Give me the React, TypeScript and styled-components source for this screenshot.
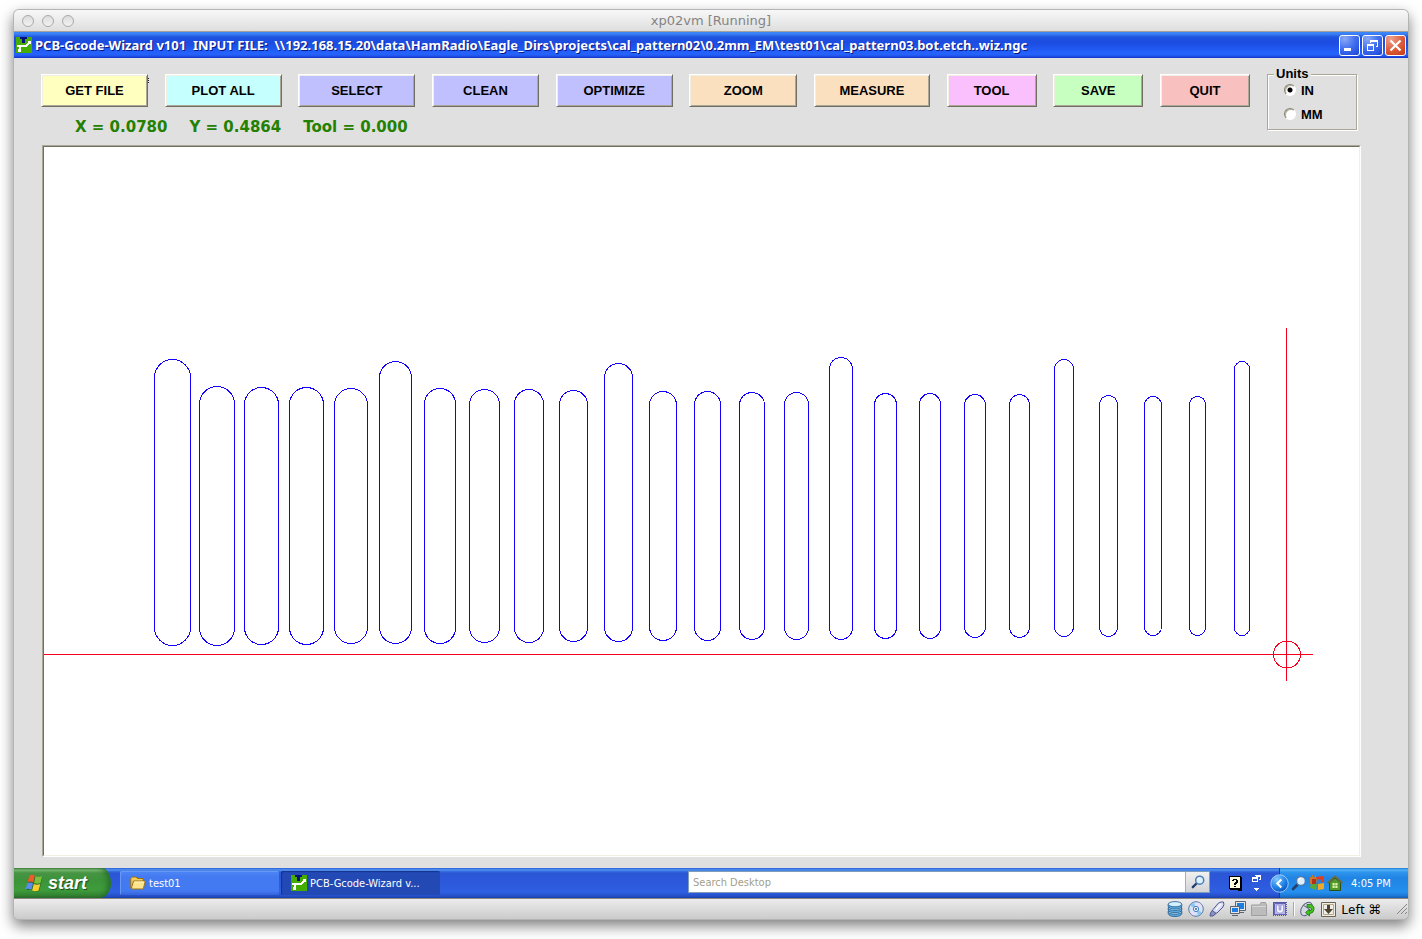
import React, { useState } from 'react';
import styled, { createGlobalStyle, css } from 'styled-components';

const GlobalStyle = createGlobalStyle`
  * { box-sizing: border-box; }
  html, body { margin: 0; padding: 0; background: #fff; }
  button, input { font: inherit; margin: 0; }
  svg { display: block; flex: none; }
`;

const uiBold = css`
  font-family: 'Liberation Sans', Arial, sans-serif;
  font-weight: 700;
  font-size: 13px;
`;
const uiSmall = css`
  font-family: 'DejaVu Sans Condensed', 'DejaVu Sans', sans-serif;
  font-size: 11px;
`;

const Page = styled.div`
  min-height: 100vh;
  padding: 10px 14px 20px;
  display: flex;
  flex-direction: column;
`;

const HostWindow = styled.div`
  flex: 1;
  display: flex;
  flex-direction: column;
  border-radius: 5px;
  background: #e0e0e0;
  box-shadow: 0 0 0 1px #b4b4b4, 0 6px 14px 1px rgba(0, 0, 0, 0.5);
`;

const HostTitle = styled.header`
  height: 22px;
  display: flex;
  align-items: center;
  border-radius: 5px 5px 0 0;
  border-bottom: 1px solid #a5a09a;
  background: linear-gradient(#f8f8f8, #dedede);
  padding: 0 8px;
`;
const HostSide = styled.div`
  width: 80px;
  display: flex;
  gap: 8px;
`;
const HostDot = styled.button`
  width: 12px;
  height: 12px;
  padding: 0;
  border: 1px solid #a9a9a9;
  border-radius: 50%;
  background: linear-gradient(#dcdcdc, #f2f2f2);
`;
const HostName = styled.h1`
  flex: 1;
  margin: 0;
  text-align: center;
  font: 400 13px/22px 'DejaVu Sans', sans-serif;
  color: #848484;
`;

const TitleBar = styled.div`
  height: 26px;
  display: flex;
  align-items: center;
  gap: 3px;
  padding: 0 2px;
  background: linear-gradient(#3a87f8 0, #3a80f4 2px, #1f55e0 5px, #1c4be0 10px, #1f56ee 16px, #2562fd 21px, #2560f8 23px, #1433c8 26px);
`;
const TitleText = styled.div`
  flex: 1;
  min-width: 0;
  font: 700 13px/24px 'Noto Sans', 'Open Sans', sans-serif;
  white-space: pre;
  overflow: hidden;
  color: #fff;
  text-shadow: 1px 1px 0 #0a1883;
`;
const CaptionButtons = styled.div`
  display: flex;
  gap: 2px;
`;
const CaptionButton = styled.button<{ $close?: boolean }>`
  width: 21px;
  height: 21px;
  padding: 0;
  display: grid;
  place-items: center;
  border: 1px solid #fff;
  border-radius: 3px;
  background: ${p =>
    p.$close
      ? 'radial-gradient(circle at 25% 15%, #eda08c, #dc5b3a 55%, #c23a12)'
      : 'radial-gradient(circle at 25% 15%, #8aa9f5, #3f6df0 50%, #1c44d4)'};
`;

const Client = styled.main`
  flex: 1;
  display: flex;
  flex-direction: column;
  padding: 9px 47px 11px 27px;
`;
const TopRow = styled.div`
  display: flex;
  gap: 17px;
  padding-right: 4px;
`;
const Controls = styled.div`
  flex: 1;
  padding-top: 7px;
`;
const Toolbar = styled.div`
  display: flex;
  justify-content: space-between;
`;
const ToolButton = styled.button<{ $tint: string; $width: number; $marked?: boolean }>`
  ${uiBold}
  position: relative;
  width: ${p => p.$width}px;
  height: 33px;
  padding: 0;
  line-height: 28px;
  color: #000;
  background: ${p => p.$tint};
  border: 1px solid;
  border-color: #fff #716f64 #716f64 #fff;
  box-shadow: inset 1px 1px 0 #f1efe2, inset -1px -1px 0 #aca899;
  ${p =>
    p.$marked &&
    css`
      &::after {
        content: '';
        position: absolute;
        left: 106px;
        top: 3px;
        width: 1px;
        height: 6px;
        background: repeating-linear-gradient(#222 0 1px, #eee 1px 2px);
      }
    `}
`;
const Readout = styled.div`
  display: flex;
  gap: 22px;
  padding: 8px 0 0 34px;
  font: 700 15px/24px 'DejaVu Sans', Verdana, sans-serif;
  color: #238000;
  white-space: nowrap;
`;

const Units = styled.fieldset`
  ${uiBold}
  width: 90px;
  height: 63px;
  margin: 0;
  padding: 1px 0 0 16px;
  border: 1px solid #aca899;
  box-shadow: 1px 1px 0 #fff, inset 1px 1px 0 #fff;
  legend {
    margin-left: -10px;
    padding: 0 2px;
    line-height: 14px;
    background: #e0e0e0;
  }
`;
const UnitOption = styled.label`
  display: flex;
  align-items: center;
  gap: 5px;
  height: 16px;
  margin-bottom: 8px;
`;
const Radio = styled.input`
  appearance: none;
  width: 12px;
  height: 12px;
  border: 1px solid;
  border-color: #85826f #fff #fff #85826f;
  border-radius: 50%;
  background: #fff;
  box-shadow: inset 1px 1px 0 #b5b2a4;
  &:checked {
    background: radial-gradient(circle, #000 0 2px, #fff 3px);
  }
`;

const PlotFrame = styled.div`
  flex: 1;
  display: flex;
  margin: 6px 0 0 1px;
  background: #fff;
  border: 1px solid;
  border-color: #aca899 #fff #fff #aca899;
`;
const PlotInner = styled.div`
  flex: 1;
  border: 1px solid;
  border-color: #716f64 #f1efe2 #f1efe2 #716f64;
`;

const Taskbar = styled.nav`
  height: 30px;
  display: flex;
  background: linear-gradient(#2a5cd8 0, #5596ee 2px, #3a74e4 3px, #2b56d4 5px, #2c57da 12px, #2f5fe2 24px, #2450c8 28px, #1b3fa8 30px);
`;
const StartButton = styled.button`
  width: 97px;
  height: 30px;
  padding: 0 0 1px 11px;
  display: flex;
  align-items: center;
  gap: 4px;
  border: 0;
  border-radius: 0 9px 11px 0 / 0 15px 15px 0;
  background: linear-gradient(#3f7f3b 0, #78b872 2px, #479443 5px, #3c933a 12px, #3f9d3c 22px, #348632 27px, #276a27 30px);
  box-shadow: inset -6px 0 6px -3px #256a2b;
  font: italic 700 18px/26px 'Liberation Sans', Arial, sans-serif;
  color: #fff;
  text-shadow: 1px 1px 1px #1b4a1b;
`;
const Tasks = styled.div`
  flex: 1;
  min-width: 0;
  display: flex;
  gap: 2px;
  padding: 3px 0 0 9px;
`;
const TaskButton = styled.button<{ $active?: boolean }>`
  ${uiSmall}
  width: 159px;
  height: 24px;
  padding: 0 10px;
  display: flex;
  align-items: center;
  gap: 3px;
  border: 0;
  border-radius: 2px;
  white-space: nowrap;
  color: #fff;
  background: ${p => (p.$active ? '#2349b5' : 'linear-gradient(#4f86f5, #437af2 6px, #437af2 20px, #3763da)')};
  box-shadow: ${p => (p.$active ? 'inset 1px 1px 1px #16338c' : 'inset 1px 1px 0 #6798f6')};
`;
const Search = styled.form`
  display: flex;
  width: 522px;
  height: 22px;
  margin: 3px 19px 0 0;
  border: 1px solid #7f9db9;
`;
const SearchInput = styled.input`
  ${uiSmall}
  flex: 1;
  min-width: 0;
  border: 0;
  padding: 0 4px;
  background: #fff;
  outline: 0;
  &::placeholder {
    color: #a3a08c;
    opacity: 1;
  }
`;
const SearchGo = styled.button`
  width: 24px;
  padding: 0;
  display: grid;
  place-items: center;
  border: 0;
  border-left: 1px solid #9fb0c4;
  background: linear-gradient(#f0f0f0, #d2d4d8);
`;
const LangBar = styled.div`
  display: flex;
  align-items: center;
  gap: 10px;
  padding-top: 1px;
`;
const Tray = styled.div`
  ${uiSmall}
  width: 129px;
  margin-left: 18px;
  padding-left: 11px;
  display: flex;
  align-items: center;
  gap: 2px;
  position: relative;
  color: #fff;
  border-left: 1px solid #123aa0;
  background: linear-gradient(#1e78d8 0, #52b4f6 2px, #2f96ee 4px, #1f84e4 10px, #2590ee 24px, #1b76d4 28px, #145bb0 30px);
`;
const TrayArrow = styled.button`
  position: absolute;
  left: -10px;
  top: 6px;
  padding: 0;
  border: 0;
  background: none;
`;
const Clock = styled.time`
  margin-left: 6px;
`;

const StatusBar = styled.footer`
  height: 21px;
  display: flex;
  align-items: center;
  justify-content: flex-end;
  gap: 5px;
  border-top: 1px solid #8b8680;
  border-radius: 0 0 5px 5px;
  background: linear-gradient(#ececec, #cbcbcb);
  font: 400 13px/20px 'Noto Sans', 'DejaVu Sans', sans-serif;
  color: #000;
`;
const Separator = styled.span`
  width: 1px;
  height: 14px;
  background: #aaa;
  box-shadow: 1px 0 0 #fafafa;
`;
const HostKey = styled.span`
  white-space: nowrap;
  margin-right: 10px;
`;

type Slot = [x: number, right: number, top: number, bottom: number];
const slots: Slot[] = [
  [154, 190, 359, 645], [199, 234, 386, 645], [244, 278, 387, 644], [289, 323, 387, 644],
  [334, 367, 388, 643], [379, 411, 361, 643], [424, 455, 388, 643], [469, 499, 389, 642],
  [514, 543, 389, 642], [559, 587, 390, 641], [604, 632, 363, 641], [649, 676, 391, 640],
  [694, 720, 391, 640], [739, 764, 392, 639], [784, 808, 392, 639], [829, 852, 357, 639],
  [874, 896, 393, 638], [919, 940, 393, 638], [964, 985, 394, 637], [1009, 1029, 394, 637],
  [1054, 1073, 359, 636], [1099, 1117, 395, 636], [1144, 1161, 396, 635], [1189, 1205, 396, 635],
  [1234, 1249, 361, 635],
];

const Plot = () => (
  <svg width="100%" height="100%" viewBox="44 147 1315 708" fill="none" shapeRendering="crispEdges" role="img" aria-label="Tool paths">
    <g stroke="#1400ff">
      {slots.map(([x, right, top, bottom]) => (
        <rect key={x} x={x + 0.5} y={top + 0.5} width={right - x} height={bottom - top} rx={(right - x) / 2} />
      ))}
    </g>
    <g stroke="#f5001d">
      <path d="M44 654.5H1313M1286.5 328V681" />
      <circle cx="1287" cy="654.5" r="13.5" />
    </g>
  </svg>
);

const AppIcon = () => (
  <svg width="16" height="16" viewBox="0 0 16 16" shapeRendering="crispEdges">
    <path fill="#44ad00" d="M0 0h16v16H0z" />
    <path fill="#00107c" d="M4 0h7v2H9v4H6V2H4z" />
    <path fill="#fff" d="M12 4h3v3h-2v1h-1v1h-1v1H5v3h0v2H2v-3h1v-2H1V8h9V7h1V6h1z" />
  </svg>
);

const WindowsFlag = () => (
  <svg width="19" height="18" viewBox="0 0 19 18">
    <path fill="#173f17" opacity=".5" d="M4 2.500q3-2 6 0 3 1.600 7.500.5l-3 13.500q-3 2-6 .5-3-2-7-.5z" />
    <path fill="#ee5a2a" d="M4.200 2Q7-.3 9.800 1.800L8.200 8.500Q5.500 6.700 2.600 8.200z" />
    <path fill="#7cc03a" d="M10.500 2.300q2.800 1.600 6.700 0l-1.700 6.700q-3.500 1.600-6.500 0z" />
    <path fill="#5a8cf0" d="M2.300 9.200Q5.200 7.500 8 9.400L6.300 15.800Q3.500 13.800.6 15.300z" />
    <path fill="#f8cf2c" d="M8.800 10q3 1.500 6.500 0l-1.700 6.400q-3.300 1.600-6.500 0z" />
  </svg>
);

const FolderIcon = () => (
  <svg width="16" height="14" viewBox="0 0 16 14">
    <path fill="#f3cd58" stroke="#9a7018" d="M.8 12V2.500L2 1h4l1.500 1.500H13V5" />
    <path fill="#fbe48a" stroke="#9a7018" d="M1.200 13 3.500 5H15.300l-2 8z" />
    <path stroke="#fff7c8" d="M4.300 6h9.800" />
  </svg>
);

const Magnifier = ({ size = 14 }: { size?: number }) => (
  <svg width={size} height={size} viewBox="0 0 14 14">
    <path stroke="#23406e" strokeWidth="2.400" strokeLinecap="round" d="M5.500 8.500 1.800 12.200" />
    <circle cx="8.700" cy="5.200" r="4" fill="#dcf0ff" stroke="#4a7cb8" strokeWidth="1.500" />
    <path stroke="#fff" fill="none" d="M6.500 4.800q.5-2 2.500-2" />
  </svg>
);

const HelpIcon = () => (
  <svg width="13" height="15" viewBox="0 0 13 15" shapeRendering="crispEdges">
    <path fill="#000" d="M1 1h12v14H9v-1H1z" />
    <path fill="#ffffd8" d="M0 0h11v12H0z" />
    <path fill="none" stroke="#000" d="M.5.5h11v12H.5z" />
    <path fill="#000" d="M4 3h4v1h1v3H8v1H7v1H5V7h1V6h1V4H5v1H3V4h1zM5 10h2v1H5z" />
  </svg>
);

const RestoreIcons = () => (
  <svg width="9" height="17" viewBox="0 0 9 17" fill="#fff" shapeRendering="crispEdges">
    <path fillRule="evenodd" d="M3 0h6v5H7V4h1V2H4V1H3zM0 2h6v5H0zm1 2v2h4V4z" />
    <path d="M2 13h5v1H6v1H5v1H4v-1H3v-1H2z" />
  </svg>
);

const ArrowCircle = () => (
  <svg width="19" height="19" viewBox="0 0 19 19">
    <defs>
      <radialGradient id="arrowBlue" cx=".35" cy=".25" r=".8">
        <stop offset="0" stopColor="#86c8ff" />
        <stop offset=".6" stopColor="#1f84ea" />
        <stop offset="1" stopColor="#0d4fb8" />
      </radialGradient>
    </defs>
    <circle cx="9.500" cy="9.500" r="8.700" fill="url(#arrowBlue)" stroke="#bfe0fb" strokeWidth=".8" />
    <path fill="none" stroke="#fff" strokeWidth="2" d="M11.300 5.500 7.300 9.500l4 4" />
  </svg>
);

const BlocksIcon = () => (
  <svg width="16" height="16" viewBox="0 0 16 16">
    <path fill="#c87830" d="M1 2h2V0h1v2h2V0h1v2h2v7H1z" />
    <path fill="#dd3e22" d="m7 2 7-1 1 6-6 1z" />
    <path fill="#2f7fd0" d="m8 4 5 1-1 5-5-1z" />
    <path fill="#58a838" d="m2 8 6 1-1 6-6-2z" />
    <path fill="#f0a828" d="m9 9 6-1v6l-6 1z" />
    <path fill="#b23018" d="M3 4h4v5H3z" />
  </svg>
);

const HouseIcon = () => (
  <svg width="16" height="16" viewBox="0 0 16 16">
    <path fill="#4f9a2c" stroke="#2c4f18" d="M2.500 7.500v8h11v-8L8 3z" />
    <path fill="none" stroke="#6b6a3c" strokeWidth="2" strokeLinejoin="round" d="M.8 8 8 1.600 15.200 8" />
    <path fill="#dff0a8" d="M5.500 8h2.200v2.200H5.500zM8.300 8h2.200v2.200H8.300zM5.500 10.800h2.200V13H5.500zM8.300 10.800h2.200V13H8.300z" />
  </svg>
);

const DiskIcon = () => (
  <svg width="16" height="16" viewBox="0 0 16 16" fill="#58aee4" stroke="#1f5688" strokeWidth=".8">
    <path d="M1.200 10.500v2Q2 15.500 8 15.500t6.800-3v-2z" />
    <ellipse cx="8" cy="10.800" rx="6.800" ry="2.400" fill="#c8ecff" />
    <path d="M1.200 7v2Q2 11.700 8 11.700T14.800 9V7z" />
    <ellipse cx="8" cy="7" rx="6.800" ry="2.400" fill="#c8ecff" />
    <path d="M1.200 3.300v2Q2 8 8 8t6.800-2.700v-2z" />
    <ellipse cx="8" cy="3.200" rx="6.800" ry="2.600" fill="#d4f0ff" />
  </svg>
);
const DiscIcon = () => (
  <svg width="16" height="16" viewBox="0 0 16 16">
    <circle cx="8" cy="8" r="7.300" fill="#d6e4f6" stroke="#5878a4" />
    <path fill="#8cc4f4" d="M8 8 2 4.500A7 7 0 0 1 6 1.500zM8 8l6 3.500a7 7 0 0 1-4 3z" />
    <path fill="#e8dcf6" d="m8 8 2-6.500a7 7 0 0 1 4 3zM8 8l-2 6.500a7 7 0 0 1-4-3z" />
    <circle cx="8" cy="8" r="2.600" fill="#fff" stroke="#3c78c0" />
    <circle cx="8" cy="8" r="1" fill="#2458a0" />
  </svg>
);
const UsbIcon = () => (
  <svg width="16" height="16" viewBox="0 0 16 16" strokeLinejoin="round">
    <path fill="#d8dcf4" stroke="#505890" d="M4 8.500 9.500 2Q12 .5 14.500 1q1 2.500-.5 5L8 12q-3 1-4.500-.5t.5-3z" />
    <path fill="#8890c4" stroke="#505890" d="m3.500 9.500 3.500 3-3 2.500L1 15l.5-3z" />
    <path stroke="#fff" strokeWidth="1.500" d="M7 8.500 12 3" />
  </svg>
);
const NetworkIcon = () => (
  <svg width="16" height="16" viewBox="0 0 16 16">
    <path fill="#e4e6ea" stroke="#5c6470" d="M5.500.5h10v9h-10zM9 11.500h5" />
    <path fill="#1c7ee0" d="M7 2h7v6H7z" />
    <path fill="#e4e6ea" stroke="#5c6470" d="M.5 5.500h9v7h-9zM2 14.500h6" />
    <path fill="#1c7ee0" d="M2 7h6v4H2z" />
  </svg>
);
const SharedFolderIcon = () => (
  <svg width="16" height="14" viewBox="0 0 16 14">
    <path fill="#bcbcbc" stroke="#a0a0a0" d="M.5 13.500V3h8L10 .5h4.500L15.500 3v10.500z" />
    <path stroke="#d6d6d6" d="M1 4.500h14" />
  </svg>
);
const ChipIcon = () => (
  <svg width="16" height="16" viewBox="0 0 16 16">
    <path stroke="#5858a8" strokeWidth="14" strokeDasharray="1 1" d="M1 8h14" />
    <path stroke="#5858a8" strokeWidth="14" strokeDasharray="1 1" d="M8 1v14" />
    <path fill="#b8b8ec" stroke="#6464b4" d="M2.500 2.500h11v11h-11z" />
    <path fill="#f4f4ff" stroke="#7c7cc8" strokeWidth=".6" d="M4.500 4H7v5h2V4h2.500v6L9.500 12h-3l-2-2z" />
  </svg>
);
const MouseIcon = () => (
  <svg width="17" height="16" viewBox="0 0 17 16">
    <ellipse cx="7.500" cy="8" rx="4.800" ry="7.500" transform="rotate(35 7.500 8)" fill="#d4d8e4" stroke="#5c6484" />
    <path stroke="#5c6484" d="m4 4 6 4" />
    <path fill="#44c41c" stroke="#187010" strokeWidth=".8" d="M8 3.500h3.500q4 1 3.500 5-.5 4-4.500 4v2.500L6.500 11.500l4-3.500v2q2-.5 2-2T8 6z" />
  </svg>
);
const CaptureIcon = () => (
  <svg width="15" height="15" viewBox="0 0 15 15">
    <path fill="#f0ede4" stroke="#6c6450" d="M.5.5h14v14H.5z" />
    <path fill="none" stroke="#b0a890" d="M2.500 2.500h10v10h-10z" />
    <path fill="#4c4432" d="M6 3h3v4h3l-4.500 5L3 7h3z" />
  </svg>
);
const Grip = () => (
  <svg width="12" height="12" viewBox="0 0 12 12" stroke="#858585">
    <path d="M1 11 11 1M5 11l6-6M9 11l2-2" />
  </svg>
);

const tools = [
  { label: 'GET FILE', tint: '#ffffc0', width: 107 },
  { label: 'PLOT ALL', tint: '#c5fffe', width: 117 },
  { label: 'SELECT', tint: '#c0c0ff', width: 117 },
  { label: 'CLEAN', tint: '#c0c0ff', width: 107 },
  { label: 'OPTIMIZE', tint: '#c0c0ff', width: 117 },
  { label: 'ZOOM', tint: '#fbe0c0', width: 108 },
  { label: 'MEASURE', tint: '#fbe0c0', width: 116 },
  { label: 'TOOL', tint: '#fabffd', width: 90 },
  { label: 'SAVE', tint: '#c6ffc0', width: 90 },
  { label: 'QUIT', tint: '#f9c0c0', width: 90 },
];

export default function App() {
  const [unit, setUnit] = useState('IN');
  return (
    <Page>
      <GlobalStyle />
      <HostWindow>
        <HostTitle>
          <HostSide>
            <HostDot aria-label="Close window" />
            <HostDot aria-label="Minimize window" />
            <HostDot aria-label="Zoom window" />
          </HostSide>
          <HostName>xp02vm [Running]</HostName>
          <HostSide />
        </HostTitle>

        <TitleBar>
          <AppIcon />
          <TitleText>
            {'PCB-Gcode-Wizard v101  INPUT FILE:  \\\\192.168.15.20\\data\\HamRadio\\Eagle_Dirs\\projects\\cal_pattern02\\0.2mm_EM\\test01\\cal_pattern03.bot.etch..wiz.ngc'}
          </TitleText>
          <CaptionButtons>
            <CaptionButton aria-label="Minimize">
              <svg width="15" height="15" viewBox="0 0 15 15"><path fill="#fff" d="M2 10h7v3H2z" /></svg>
            </CaptionButton>
            <CaptionButton aria-label="Restore">
              <svg width="15" height="15" viewBox="0 0 15 15" fill="#fff" shapeRendering="crispEdges">
                <path fillRule="evenodd" d="M5 2h8v7h-2V8h1V4H6v1H5zM2 6h7v7H2zm1 2v4h5V8z" />
              </svg>
            </CaptionButton>
            <CaptionButton $close aria-label="Close">
              <svg width="15" height="15" viewBox="0 0 15 15"><path stroke="#fff" strokeWidth="2.200" d="m2.500 2.500 10 10m0-10-10 10" /></svg>
            </CaptionButton>
          </CaptionButtons>
        </TitleBar>

        <Client>
          <TopRow>
            <Controls>
              <Toolbar>
                {tools.map((t, i) => (
                  <ToolButton key={t.label} $tint={t.tint} $width={t.width} $marked={i === 0}>
                    {t.label}
                  </ToolButton>
                ))}
              </Toolbar>
              <Readout>
                <span>X = 0.0780</span>
                <span>Y = 0.4864</span>
                <span>Tool = 0.000</span>
              </Readout>
            </Controls>
            <Units>
              <legend>Units</legend>
              {['IN', 'MM'].map(u => (
                <UnitOption key={u}>
                  <Radio type="radio" name="units" checked={unit === u} onChange={() => setUnit(u)} />
                  {u}
                </UnitOption>
              ))}
            </Units>
          </TopRow>
          <PlotFrame>
            <PlotInner>
              <Plot />
            </PlotInner>
          </PlotFrame>
        </Client>

        <Taskbar>
          <StartButton>
            <WindowsFlag />
            start
          </StartButton>
          <Tasks>
            <TaskButton><FolderIcon />test01</TaskButton>
            <TaskButton $active><AppIcon />PCB-Gcode-Wizard v...</TaskButton>
          </Tasks>
          <Search onSubmit={e => e.preventDefault()}>
            <SearchInput aria-label="Search Desktop" placeholder="Search Desktop" />
            <SearchGo aria-label="Search"><Magnifier /></SearchGo>
          </Search>
          <LangBar>
            <HelpIcon />
            <RestoreIcons />
          </LangBar>
          <Tray>
            <TrayArrow aria-label="Show hidden icons"><ArrowCircle /></TrayArrow>
            <Magnifier size={16} />
            <BlocksIcon />
            <HouseIcon />
            <Clock>4:05 PM</Clock>
          </Tray>
        </Taskbar>

        <StatusBar>
          <DiskIcon />
          <DiscIcon />
          <UsbIcon />
          <NetworkIcon />
          <SharedFolderIcon />
          <ChipIcon />
          <Separator />
          <MouseIcon />
          <CaptureIcon />
          <HostKey>Left ⌘</HostKey>
          <Grip />
        </StatusBar>
      </HostWindow>
    </Page>
  );
}
